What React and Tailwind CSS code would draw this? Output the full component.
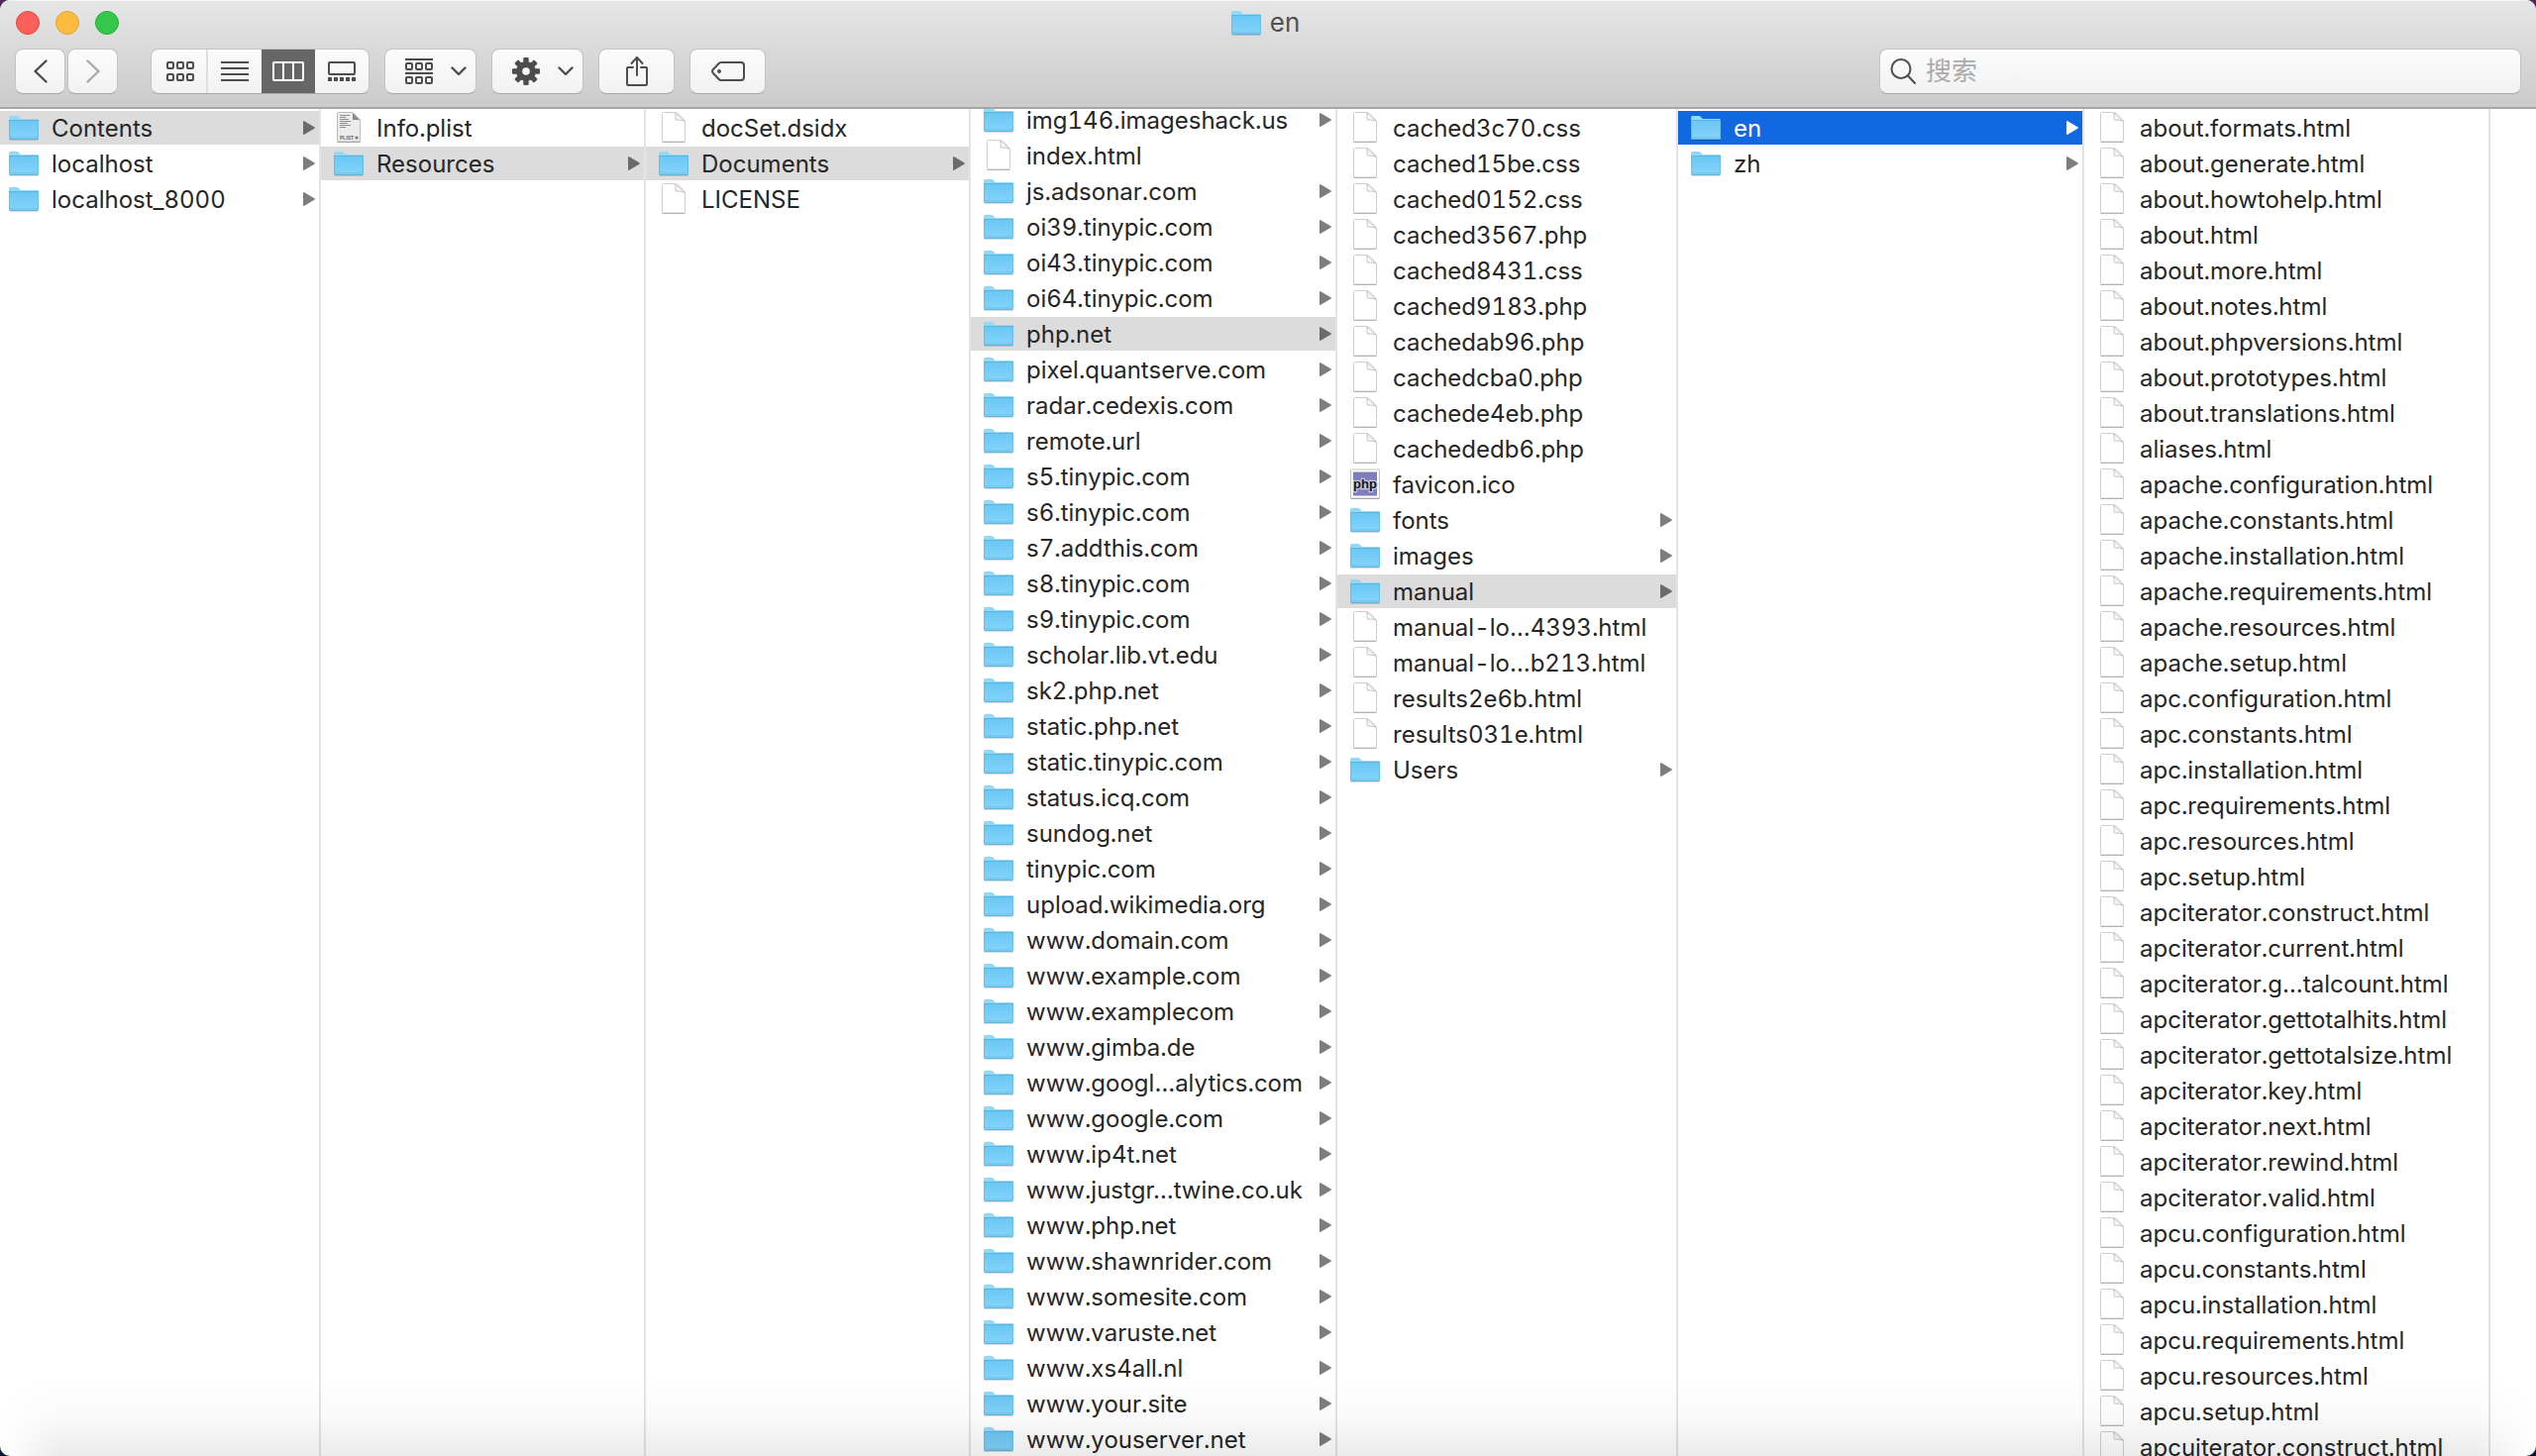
import { useId, useState } from "react";

const titleFont = "font-['Inter','Noto_Sans_CJK_SC',sans-serif]";

// f = folder, d = document, p = plist, i = image
const columns = [
  {
    width: "w-[324px]",
    pad: "pl-2",
    selected: "Contents",
    items: ["f:Contents", "f:localhost", "f:localhost_8000"],
  },
  {
    width: "w-[328px]",
    pad: "pl-3",
    selected: "Resources",
    items: ["p:Info.plist", "f:Resources"],
  },
  {
    width: "w-[328px]",
    pad: "pl-3",
    selected: "Documents",
    items: ["d:docSet.dsidx", "f:Documents", "d:LICENSE"],
  },
  {
    width: "w-[370px]",
    pad: "pl-3",
    selected: "php.net",
    scrolled: true,
    items: [
      "f:img146.imageshack.us",
      "d:index.html",
      "f:js.adsonar.com",
      "f:oi39.tinypic.com",
      "f:oi43.tinypic.com",
      "f:oi64.tinypic.com",
      "f:php.net",
      "f:pixel.quantserve.com",
      "f:radar.cedexis.com",
      "f:remote.url",
      "f:s5.tinypic.com",
      "f:s6.tinypic.com",
      "f:s7.addthis.com",
      "f:s8.tinypic.com",
      "f:s9.tinypic.com",
      "f:scholar.lib.vt.edu",
      "f:sk2.php.net",
      "f:static.php.net",
      "f:static.tinypic.com",
      "f:status.icq.com",
      "f:sundog.net",
      "f:tinypic.com",
      "f:upload.wikimedia.org",
      "f:www.domain.com",
      "f:www.example.com",
      "f:www.examplecom",
      "f:www.gimba.de",
      "f:www.googl…alytics.com",
      "f:www.google.com",
      "f:www.ip4t.net",
      "f:www.justgr…twine.co.uk",
      "f:www.php.net",
      "f:www.shawnrider.com",
      "f:www.somesite.com",
      "f:www.varuste.net",
      "f:www.xs4all.nl",
      "f:www.your.site",
      "f:www.youserver.net",
    ],
  },
  {
    width: "w-[344px]",
    pad: "pl-3",
    selected: "manual",
    items: [
      "d:cached3c70.css",
      "d:cached15be.css",
      "d:cached0152.css",
      "d:cached3567.php",
      "d:cached8431.css",
      "d:cached9183.php",
      "d:cachedab96.php",
      "d:cachedcba0.php",
      "d:cachede4eb.php",
      "d:cachededb6.php",
      "i:favicon.ico",
      "f:fonts",
      "f:images",
      "f:manual",
      "d:manual-lo…4393.html",
      "d:manual-lo…b213.html",
      "d:results2e6b.html",
      "d:results031e.html",
      "f:Users",
    ],
  },
  {
    width: "w-[410px]",
    pad: "pl-3",
    selected: "en",
    active: true,
    items: ["f:en", "f:zh"],
  },
  {
    width: "w-[410px]",
    pad: "pl-3",
    items: [
      "d:about.formats.html",
      "d:about.generate.html",
      "d:about.howtohelp.html",
      "d:about.html",
      "d:about.more.html",
      "d:about.notes.html",
      "d:about.phpversions.html",
      "d:about.prototypes.html",
      "d:about.translations.html",
      "d:aliases.html",
      "d:apache.configuration.html",
      "d:apache.constants.html",
      "d:apache.installation.html",
      "d:apache.requirements.html",
      "d:apache.resources.html",
      "d:apache.setup.html",
      "d:apc.configuration.html",
      "d:apc.constants.html",
      "d:apc.installation.html",
      "d:apc.requirements.html",
      "d:apc.resources.html",
      "d:apc.setup.html",
      "d:apciterator.construct.html",
      "d:apciterator.current.html",
      "d:apciterator.g…talcount.html",
      "d:apciterator.gettotalhits.html",
      "d:apciterator.gettotalsize.html",
      "d:apciterator.key.html",
      "d:apciterator.next.html",
      "d:apciterator.rewind.html",
      "d:apciterator.valid.html",
      "d:apcu.configuration.html",
      "d:apcu.constants.html",
      "d:apcu.installation.html",
      "d:apcu.requirements.html",
      "d:apcu.resources.html",
      "d:apcu.setup.html",
      "d:apcuiterator.construct.html",
    ],
  },
];

// FILE ICONS
function FolderIcon() {
  const id = useId();
  return (
    <svg width="32" height="32" viewBox="0 0 32 32" className="shrink-0" aria-hidden="true">
      <defs>
        <linearGradient id={id} x1="0" y1="0" x2="0" y2="1">
          <stop offset="0" stopColor="#6bc8f5" />
          <stop offset="1" stopColor="#84d4fa" />
        </linearGradient>
      </defs>
      <path d="M1.500 28.400h29" stroke="#000" strokeOpacity=".14" strokeWidth="1.200" />
      <path d="M1 5.500Q1 4 2.500 4h6.500q1.200 0 1.900.9l1.300 1.500q.5.6 1.400.6H29.500Q31 7 31 8.500V26q0 1.500-1.500 1.500h-27Q1 27.500 1 26Z" fill="#8fdaf9" />
      <path d="M1 9h30v17q0 1.500-1.500 1.500h-27Q1 27.500 1 26Z" fill={`url(#${id})`} />
      <path d="M1 8.500h30" stroke="#5fb5dd" />
      <path d="M1.500 25.500h29" stroke="#6fc0e6" strokeOpacity=".6" />
      <path d="M1.500 27.300h29" stroke="#58abd3" />
      <path d="M1.500 8v18.500M30.500 8v18.500" stroke="#62b8e0" strokeOpacity=".7" />
    </svg>
  );
}

function DocIcon() {
  return (
    <svg width="32" height="32" viewBox="0 0 32 32" className="shrink-0" aria-hidden="true">
      <path d="M4.500 1.500q0-1 1-1H17.500q3 .5 5.500 3.500t4.500 5V29q0 1-1 1h-21q-1 0-1-1Z" fill="#fff" stroke="#cfcfcf" />
      <path d="M4.500 30.500h23" stroke="#b3b3b3" />
      <path d="M17.500.8q.8 2.500.8 7.200 5-.2 8.800 1.200Q21 4 17.500.8Z" fill="#fafafa" stroke="#c6c6c6" strokeLinejoin="round" />
    </svg>
  );
}

function PlistIcon() {
  return (
    <svg width="32" height="32" viewBox="0 0 32 32" className="shrink-0" aria-hidden="true">
      <path d="M4.500 1.500q0-1 1-1H20L27.500 8V29q0 1-1 1h-21q-1 0-1-1Z" fill="#ececec" stroke="#bcbcbc" />
      <path d="M4.500 30.500h23" stroke="#a5a5a5" />
      <path d="M7 3.500h10M7 5.500h6M7 7.500h9M7 9.500h11M7 11.500h8M7 13.500h11M7 15.500h6" stroke="#8f8f8f" />
      <path d="M20 .8V8h7.200Z" fill="#8a8a8a" />
      <text x="7" y="27.500" fontSize="5" fontWeight="700" fill="#666" fontFamily="Liberation Sans, sans-serif">PLIST</text>
      <circle cx="24" cy="26" r="1.600" fill="#777" />
    </svg>
  );
}

function FaviconIcon() {
  return (
    <svg width="32" height="32" viewBox="0 0 32 32" className="shrink-0" aria-hidden="true">
      <rect x="1.500" y="2" width="29" height="29" rx="1" fill="#8c8c8c" />
      <rect x="1.500" y="1" width="29" height="29" rx="1" fill="#fff" stroke="#c2c2c2" />
      <rect x="4" y="3.500" width="24" height="24" fill="#7f7dbb" />
      <text
        x="16"
        y="20"
        textAnchor="middle"
        fontSize="13"
        fontWeight="700"
        fill="#111"
        stroke="#c9c8d8"
        strokeWidth="2.500"
        paintOrder="stroke"
        fontFamily="Liberation Sans, sans-serif"
      >
        php
      </text>
    </svg>
  );
}

function FileIcon({ type }) {
  if (type === "f") return <FolderIcon />;
  if (type === "p") return <PlistIcon />;
  if (type === "i") return <FaviconIcon />;
  return <DocIcon />;
}

function Row({ item, pad, selected, active, onSelect }) {
  const type = item[0];
  const name = item.slice(2);

  let look = "text-[#262626]";
  let arrow = "fill-[#7d7d7d]";
  if (selected) {
    look = active ? "bg-[#1168e0] text-white" : "bg-[#dcdcdc] text-[#262626]";
    arrow = active ? "fill-white" : "fill-[#6b6b6b]";
  }

  return (
    <li>
      <button
        type="button"
        onClick={onSelect}
        className={`flex h-[34px] w-full items-center pr-1 text-left ${pad} ${look}`}
      >
        <FileIcon type={type} />
        <span className="ml-3 grow whitespace-nowrap pt-0.5">{name}</span>
        {type === "f" && (
          <svg width="12" height="14" viewBox="0 0 12 14" className={`shrink-0 ${arrow}`} aria-hidden="true">
            <path d="M0 1q0-1.300 1.200-.7l10.200 6q1 .7 0 1.400l-10.200 6Q0 14.300 0 13Z" />
          </svg>
        )}
      </button>
    </li>
  );
}

function Column({ column }) {
  const [selected, setSelected] = useState(column.selected);

  return (
    <ul
      className={`flex shrink-0 flex-col gap-0.5 border-r-2 border-[#e4e4e4] ${column.width} ${
        column.scrolled ? "-mt-1.5 pt-0" : "pt-0.5"
      }`}
    >
      {column.items.map((item) => (
        <Row
          key={item}
          item={item}
          pad={column.pad}
          selected={item.slice(2) === selected}
          active={column.active}
          onSelect={() => setSelected(item.slice(2))}
        />
      ))}
    </ul>
  );
}

// TOOLBAR
const buttonLook =
  "flex h-[46px] items-center rounded-lg border border-[#c3c3c3] border-b-[#a9a9a9] bg-linear-to-b from-[#fcfcfc] to-[#f2f2f2] text-[#4d4d4d]";

function Squares({ y }) {
  return [1, 11, 21].map((x) => (
    <rect key={x} x={x} y={y} width="6" height="6" rx="1" />
  ));
}

function ChevronDown() {
  return (
    <svg width="16" height="10" viewBox="0 0 16 10" fill="none" stroke="currentColor" strokeWidth="2.400" strokeLinecap="round" strokeLinejoin="round" aria-hidden="true">
      <path d="M1.500 1.500 8 8l6.500-6.500" />
    </svg>
  );
}

function Toolbar() {
  const [view, setView] = useState("columns");

  const views = [
    {
      id: "icons",
      label: "Icons",
      width: "w-[57px]",
      icon: (
        <svg width="28" height="20" viewBox="0 0 28 20" fill="none" stroke="currentColor" strokeWidth="2">
          <Squares y={1} />
          <Squares y={13} />
        </svg>
      ),
    },
    {
      id: "list",
      label: "List",
      width: "w-[54px]",
      icon: (
        <svg width="28" height="20" viewBox="0 0 28 20" stroke="currentColor" strokeWidth="2">
          <path d="M0 1h28M0 7h28M0 13h28M0 19h28" />
        </svg>
      ),
    },
    {
      id: "columns",
      label: "Columns",
      width: "w-[54px]",
      icon: (
        <svg width="32" height="20" viewBox="0 0 32 20" fill="none" stroke="currentColor" strokeWidth="2">
          <rect x="1" y="1" width="30" height="18" rx="1" />
          <path d="M11 1v18M21 1v18" />
        </svg>
      ),
    },
    {
      id: "gallery",
      label: "Gallery",
      width: "w-[54px]",
      icon: (
        <svg width="28" height="20" viewBox="0 0 28 20" fill="none" stroke="currentColor" strokeWidth="2">
          <rect x="1" y="1" width="26" height="12" rx="1" />
          <path d="M0 18h28" strokeWidth="4" strokeDasharray="4 2" />
        </svg>
      ),
    },
  ];

  return (
    <div className="flex items-center gap-[15px] px-[15px]">
      {/* BACK / FORWARD */}
      <div className="mr-[18px] flex gap-0.5">
        <button type="button" aria-label="Back" className={`${buttonLook} w-[51px] justify-center`}>
          <svg width="14" height="24" viewBox="0 0 14 24" fill="none" stroke="currentColor" strokeWidth="2.400" strokeLinecap="round" strokeLinejoin="round">
            <path d="M12.500 1.500 1.500 12l11 10.500" />
          </svg>
        </button>
        <button type="button" aria-label="Forward" className={`${buttonLook} w-[51px] justify-center`}>
          <svg width="14" height="24" viewBox="0 0 14 24" fill="none" stroke="#a9a9a9" strokeWidth="2.400" strokeLinecap="round" strokeLinejoin="round">
            <path d="M1.500 1.500 12.500 12l-11 10.500" />
          </svg>
        </button>
      </div>

      {/* VIEW MODE */}
      <div className={`${buttonLook} overflow-hidden`}>
        {views.map((v) => (
          <button
            key={v.id}
            type="button"
            aria-label={v.label}
            onClick={() => setView(v.id)}
            className={`flex h-[46px] items-center justify-center ${v.width} ${
              view === v.id ? "bg-[#666666] text-white" : ""
            } ${v.id === "icons" ? "border-r-2 border-[#dedede] pl-0.5" : ""}`}
          >
            {v.icon}
          </button>
        ))}
      </div>

      {/* GROUP */}
      <button type="button" aria-label="Group" className={`${buttonLook} w-[93px] justify-between pr-[9px] pl-5`}>
        <svg width="28" height="28" viewBox="0 0 28 28" fill="none" stroke="currentColor" strokeWidth="2">
          <path d="M0 2h28M0 16h28" />
          <Squares y={6} />
          <Squares y={20} />
        </svg>
        <ChevronDown />
      </button>

      {/* ACTION */}
      <button type="button" aria-label="Action" className={`${buttonLook} w-[93px] justify-between pr-[9px] pl-5`}>
        <svg width="28" height="28" viewBox="-14 -14 28 28" fill="currentColor">
          {[0, 45, 90, 135].map((a) => (
            <rect key={a} x="-2.700" y="-14" width="5.400" height="28" rx="1" transform={`rotate(${a})`} />
          ))}
          <circle r="10" />
          <circle r="3.800" className="fill-[#f7f7f7]" />
        </svg>
        <ChevronDown />
      </button>

      {/* SHARE */}
      <button type="button" aria-label="Share" className={`${buttonLook} w-[77px] justify-center`}>
        <svg width="24" height="32" viewBox="0 0 24 32" fill="none" stroke="currentColor" strokeWidth="2" strokeLinejoin="round" strokeLinecap="round">
          <path d="M8 12H3q-1 0-1 1v16q0 1 1 1h18q1 0 1-1V13q0-1-1-1h-5" />
          <path d="M12 20V2M6.500 8 12 2l5.500 6" />
        </svg>
      </button>

      {/* TAGS */}
      <button type="button" aria-label="Tags" className={`${buttonLook} w-[77px] justify-center`}>
        <svg width="34" height="20" viewBox="0 0 34 20" fill="none" stroke="currentColor" strokeWidth="2" strokeLinejoin="round">
          <path d="M10 1h20q3 0 3 3v12q0 3-3 3H10q-1.500 0-2.600-1.200L1.600 11.500q-1.200-1.500 0-3L7.400 2.200Q8.500 1 10 1Z" />
          <circle cx="8" cy="10" r="2" fill="currentColor" stroke="none" />
        </svg>
      </button>

      {/* SEARCH */}
      <label className={`${buttonLook} ml-auto w-1/3 max-w-[648px] px-[10px]`}>
        <svg width="26" height="26" viewBox="0 0 26 26" fill="none" stroke="currentColor" strokeWidth="2" strokeLinecap="round" className="shrink-0" aria-hidden="true">
          <circle cx="11" cy="10.500" r="9.500" />
          <path d="m18 17.500 7 7.500" />
        </svg>
        <input
          type="search"
          aria-label="搜索"
          placeholder="搜索"
          className="ml-[10px] min-w-0 grow bg-transparent text-[26px] leading-8 outline-none placeholder:text-[#ababab]"
        />
      </label>
    </div>
  );
}

function App() {
  return (
    <div className="h-screen bg-linear-to-b from-[#4a2a5c] to-[#0a1838]">
      <div className={`flex h-full flex-col overflow-hidden rounded-[10px] bg-white text-2xl leading-8 tabular-nums ${titleFont}`}>
        {/* TITLE BAR */}
        <header className="h-[110px] shrink-0 border-t border-b-2 border-t-[#f4f4f4] border-b-[#a6a6a6] bg-linear-to-b from-[#e6e6e6] to-[#cbcbcb]">
          <div className="grid h-12 grid-cols-[1fr_auto_1fr] items-center">
            <div className="flex gap-4 pb-1 pl-4">
              <button type="button" aria-label="Close" className="size-6 rounded-full border border-[#e0443e] bg-[#fc605b]" />
              <button type="button" aria-label="Minimize" className="size-6 rounded-full border border-[#dea033] bg-[#fdbc40]" />
              <button type="button" aria-label="Zoom" className="size-6 rounded-full border border-[#27aa35] bg-[#34c84a]" />
            </div>
            <h1 className="flex items-center gap-2 pr-1.5 pb-1 text-[26px] text-[#505050]">
              <FolderIcon />
              <span>en</span>
            </h1>
          </div>
          <Toolbar />
        </header>

        {/* COLUMNS */}
        <main className="relative flex min-h-0 grow overflow-hidden">
          {columns.map((column, i) => (
            <Column key={i} column={column} />
          ))}
          <div className="pointer-events-none absolute inset-x-0 bottom-0 h-20 bg-linear-to-b from-transparent via-black/2 to-black/8 [mask-image:linear-gradient(to_right,transparent,black_64px,black_calc(100%-64px),transparent)]" />
        </main>
      </div>
    </div>
  );
}

export default App;
